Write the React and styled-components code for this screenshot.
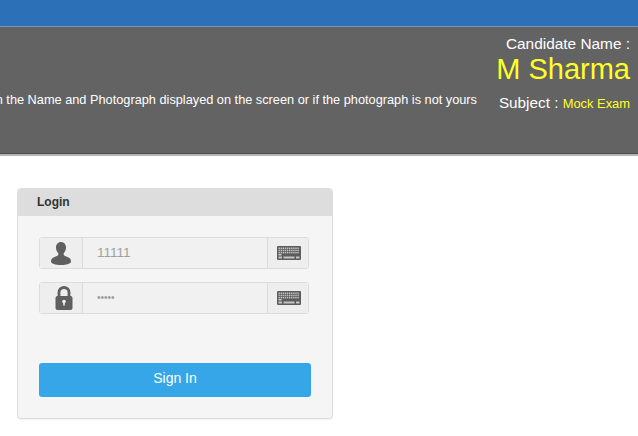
import React from "react";
import styled, { createGlobalStyle } from "styled-components";

const Global = createGlobalStyle`
  html, body { margin: 0; padding: 0; background: #fff; overflow: hidden; }
  body { font-family: "Liberation Sans", Arial, sans-serif; }
`;
const Page = styled.div`width: 638px; height: 436px; overflow: hidden; display: flex; flex-direction: column;`;
const TopBar = styled.div`height: 26px; background: #2c70b8; border-bottom: 1px solid #7a95b5; flex: none;`;
const Banner = styled.header`
  height: 126px; flex: none; background: #636363; border-bottom: 1px solid #4c4c4c;
  box-shadow: 0 2px 0 #b5b5b5;
  display: flex; justify-content: flex-end; overflow: hidden;
`;
const Message = styled.div`
  flex: none; align-self: flex-start; margin-top: 64px; margin-right: 21px;
  color: #fff; font-size: 12.75px; line-height: 18px; white-space: nowrap;
`;
const Candidate = styled.div`
  flex: none; width: 140px; padding-right: 8px; box-sizing: border-box;
  display: flex; flex-direction: column; align-items: flex-end; padding-top: 8px;
`;
const CandidateLabel = styled.div`color: #fff; font-size: 15.4px; line-height: 18px;`;
const CandidateName = styled.div`color: #ffff26; font-size: 29px; line-height: 33px; white-space: nowrap;`;
const Subject = styled.div`color: #fff; font-size: 15.3px; line-height: 20px; margin-top: 7px; white-space: nowrap;`;
const SubjectValue = styled.span`color: #ffff26; font-size: 12.9px;`;
const Main = styled.main`padding: 34px 0 0 17px;`;
const Panel = styled.section`
  width: 316px; height: 231px; box-sizing: border-box; background: #f5f5f5;
  border: 1px solid #dddddd; border-radius: 4px; overflow: hidden; box-shadow: 0 1px 1px rgba(0,0,0,.05);
`;
const PanelHeading = styled.div`
  height: 27px; box-sizing: border-box; background: #dddddd; color: #333;
  font-size: 12px; font-weight: 700; line-height: 26px; padding-left: 19px;
`;
const PanelBody = styled.div`padding: 21px 21px 0 21px; display: flex; flex-direction: column;`;
const Group = styled.div`
  display: flex; width: 270px; height: 32px; box-sizing: border-box; margin-bottom: 13px;
  border: 1px solid #dcdcdc; border-radius: 3px; background: #f0f0f0;
`;
const Addon = styled.div`
  flex: none; width: ${p => p.$w}px; display: flex; align-items: center; justify-content: center; background: #eeeeee;
  border-${p => p.$side}: 1px solid #dcdcdc;
`;
const Field = styled.div`
  flex: 1; padding-left: 14px; line-height: 30px; color: #a0a0a0; font-size: 13.5px; background: #f1f1f1;
`;
const Dots = styled(Field)`font-size: 10px; color: #9a9a9a;`;
const Button = styled.button`
  display: block; width: 272px; height: 34px; margin-top: 36px; padding: 0 0 5px; border: 0; border-radius: 3px;
  background: #36a6e9; color: #fff; font: 14px "Liberation Sans", Arial, sans-serif;
`;
const LockSvg = styled.svg`margin-left: 5px;`;
const KeyboardSvg = styled.svg`margin-left: 1px;`;

const UserIcon = () => (
  <svg width="20" height="23" viewBox="0 0 20 23">
    <path fill="#5f5f5f" d="M10 0c3 0 5 2.400 5 5.500 0 2.300-.9 4.300-2.300 5.700v1.600c0 .9 1.500 1.300 3.200 2 2.200.9 4.100 1.800 4.100 4.400 0 2.500-4.200 3.800-10 3.800S0 21.700 0 19.200c0-2.600 1.900-3.500 4.100-4.400 1.700-.7 3.200-1.100 3.200-2v-1.600C5.900 9.800 5 7.800 5 5.500 5 2.400 7 0 10 0z"/>
  </svg>
);
const LockIcon = () => (
  <LockSvg width="18" height="24" viewBox="0 0 18 24">
    <path fill="none" stroke="#5f5f5f" strokeWidth="2.800" d="M4 11V6.500C4 3.400 6.200 1.500 9 1.500s5 1.900 5 5V11"/>
    <rect x="0.500" y="10" width="17" height="14" rx="2" fill="#5f5f5f"/>
    <circle cx="9" cy="15.500" r="1.800" fill="#f2f2f2"/>
    <rect x="8.200" y="15.500" width="1.600" height="4" fill="#f2f2f2"/>
  </LockSvg>
);
const KeyboardIcon = () => {
  const keys = [];
  for (let r = 0; r < 3; r++) for (let c = 0; c < 10; c++)
    keys.push(<rect key={`${r}-${c}`} x={1.500 + c * 2.100} y={1.500 + r * 2.200} width="1.400" height="1.500" fill="#c4c4c4" />);
  return (
    <KeyboardSvg width="24" height="14" viewBox="0 0 24 14">
      <rect width="24" height="14" rx="1" fill="#5c5c5c"/>
      {keys}
      <rect x="1.500" y="8" width="3" height="1.500" fill="#c4c4c4"/>
      <rect x="1.500" y="10.500" width="3.500" height="2" fill="#c4c4c4"/>
      <rect x="6.500" y="10.500" width="11" height="2" fill="#c4c4c4"/>
      <rect x="19" y="10.500" width="3.500" height="2" fill="#c4c4c4"/>
    </KeyboardSvg>
  );
};

export default function App() {
  return (
    <Page>
      <Global />
      <TopBar />
      <Banner>
        <Message>n the Name and Photograph displayed on the screen or if the photograph is not yours</Message>
        <Candidate>
          <CandidateLabel>Candidate Name :</CandidateLabel>
          <CandidateName>M Sharma</CandidateName>
          <Subject>Subject : <SubjectValue>Mock Exam</SubjectValue></Subject>
        </Candidate>
      </Banner>
      <Main>
        <Panel>
          <PanelHeading>Login</PanelHeading>
          <PanelBody>
            <Group>
              <Addon $w={42} $side="right"><UserIcon /></Addon>
              <Field>11111</Field>
              <Addon $w={40} $side="left"><KeyboardIcon /></Addon>
            </Group>
            <Group>
              <Addon $w={42} $side="right"><LockIcon /></Addon>
              <Dots>•••••</Dots>
              <Addon $w={40} $side="left"><KeyboardIcon /></Addon>
            </Group>
            <Button>Sign In</Button>
          </PanelBody>
        </Panel>
      </Main>
    </Page>
  );
}
